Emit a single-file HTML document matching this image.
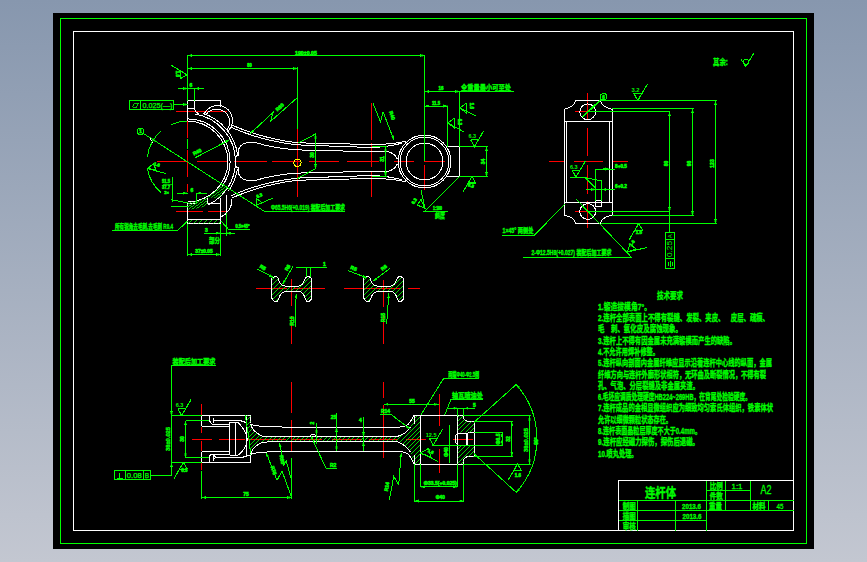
<!DOCTYPE html>
<html lang="zh"><head><meta charset="utf-8"><title>连杆体</title>
<style>
html,body{margin:0;padding:0;background:#c3c7d1;}
#wrap{position:relative;width:867px;height:562px;overflow:hidden;background:linear-gradient(to bottom,#8797ae 0%,#c3c7d1 100%);}
svg{position:absolute;left:0;top:0;display:block;font-family:"Liberation Sans","Noto Sans CJK SC",sans-serif;}
</style></head><body><div id="wrap">
<svg width="867" height="562" viewBox="0 0 867 562" fill="none" stroke-width="1" stroke-linecap="butt" shape-rendering="crispEdges">
<defs>
<clipPath id="hb1"><path d="M221.85 182.96 A40.5 40.5 0 0 1 187.5 202 V211 L187.5 209.5 A48 48 0 0 0 228.21 186.94 Z"/></clipPath>
<clipPath id="hb1b"><path d="M186 180 H207.4 V212 H186 Z M207.4 180 H232 V197.8 H207.4 Z" /></clipPath>
<clipPath id="hb2"><path d="M187.5 219.5 H220.5 V223.5 H187.5 Z"/></clipPath>
<clipPath id="sc1"><path d="M271.4 280 Q271.4 276.9 274.3 276.9 L276.5 276.9 Q278.1 277.1 278.9 280.5 Q281 286 285 286.1 L298.3 286.1 Q302.3 286 304.4 280.5 Q305.2 277.1 306.8 276.9 L309 276.9 Q311.6 276.9 311.6 280 L311.6 298 Q311.3 300.7 308.1 301.9 Q306.3 301.7 305.1 298 Q303 291.7 299 291.6 L286 291.6 Q281 291.7 278.9 298 Q277.7 301.7 276.1 301.9 Q272.3 300.7 271.4 296.8 Z"/></clipPath>
<clipPath id="sc2"><path d="M363.4 280 Q363.4 276.9 366.3 276.9 L368.5 276.9 Q370.1 277.1 370.9 280.5 Q373 286 377 286.1 L390.3 286.1 Q394.3 286 396.4 280.5 Q397.2 277.1 398.8 276.9 L401 276.9 Q403.6 276.9 403.6 280 L403.6 298 Q403.3 300.7 400.1 301.9 Q398.3 301.7 397.1 298 Q395 291.7 391 291.6 L378 291.6 Q373 291.7 370.9 298 Q369.7 301.7 368.1 301.9 Q364.3 300.7 363.4 296.8 Z"/></clipPath>
<clipPath id="web"><path d="M245.3 415.5 L250.5 415.5 L250.5 424.3 Q252 431 262 436 L272 436.6 H397 Q406 434 410.5 427 L414 416 L420.5 415.5 L420.5 464 L414 464 L410.5 452 Q406 445 397 441.6 H272 L262 443 Q252 447 250.5 455.5 L249.5 441.4 L247.5 430 Z"/></clipPath>
<clipPath id="se2"><path d="M457.8 415.5 H463.5 V418 Q465 421.5 469 421.5 H474 V432.5 H457.8 Z M457.8 445 H474 V456.5 H469 Q465 456.5 463.5 460 V464 H457.8 Z"/></clipPath>
</defs>
<rect x="53" y="13" width="761" height="536" fill="#000" stroke="none"/>
<rect x="60.5" y="18.5" width="746" height="525" stroke="#00ff00"/>
<rect x="73.5" y="31.5" width="720" height="499" stroke="#ffffff"/>
<g id="v1">
<line x1="157" y1="161.5" x2="187" y2="161.5" stroke="#ff0000"/>
<line x1="197" y1="161.5" x2="226.5" y2="161.5" stroke="#ff0000"/>
<line x1="234" y1="161.5" x2="266.7" y2="161.5" stroke="#ff0000"/>
<line x1="271.7" y1="161.5" x2="301" y2="161.5" stroke="#ff0000"/>
<line x1="309" y1="161.5" x2="339" y2="161.5" stroke="#ff0000"/>
<line x1="347" y1="161.5" x2="378.5" y2="161.5" stroke="#ff0000"/>
<line x1="393.5" y1="161.5" x2="414" y2="161.5" stroke="#ff0000"/>
<line x1="423.5" y1="161.5" x2="444.5" y2="161.5" stroke="#ff0000"/>
<line x1="187.5" y1="121" x2="187.5" y2="137.6" stroke="#ff0000"/>
<line x1="187.5" y1="139.3" x2="187.5" y2="148.5" stroke="#00ff00"/>
<line x1="187.5" y1="150" x2="187.5" y2="176.7" stroke="#ff0000"/>
<line x1="187.5" y1="184.3" x2="187.5" y2="191.8" stroke="#ff0000"/>
<line x1="176" y1="111.5" x2="227" y2="111.5" stroke="#ff0000"/>
<line x1="176" y1="211.5" x2="203" y2="211.5" stroke="#ff0000"/>
<line x1="208" y1="211.5" x2="227" y2="211.5" stroke="#ff0000"/>
<line x1="297.5" y1="129" x2="297.5" y2="197" stroke="#ff0000"/>
<line x1="371.5" y1="102.5" x2="371.5" y2="197" stroke="#ff0000" stroke-dasharray="37 3 24 5 40"/>
<line x1="424.5" y1="165" x2="424.5" y2="190" stroke="#ff0000"/>
<path d="M187.5 121.2 A40.3 40.3 0 0 1 227.8 161.5" stroke="#ffffff"/>
<path d="M187.5 118.9 A42.6 42.6 0 0 1 230.1 161.5" stroke="#ffffff"/>
<path d="M195.01 114.09 A48 48 0 0 1 235.5 161.5" stroke="#ffffff"/>
<path d="M203.11 113.47 A50.5 50.5 0 0 1 237.51 154.47" stroke="#ffffff"/>
<path d="M204.1 114.2 A14.9 14.9 0 1 1 228.4 130.7" stroke="#ffffff"/>
<path d="M206.2 114.2 A12.9 12.9 0 1 1 227 130" stroke="#ffffff"/>
<path d="M237.5 154.5 L235.6 158" stroke="#ffffff"/>
<path d="M231.7 125 Q262 138.5 297.5 142.8 L371.5 144.5 Q392 144.5 405.5 141.3" stroke="#ffffff"/>
<path d="M231.3 127.4 Q262 141 297.5 144.9 L371.5 147.5 Q388 147 401.5 143.3" stroke="#ffffff"/>
<path d="M238.2 156 L238.3 150.5 Q239.5 144.5 247 142.5 L255 142.5 Q275 148.5 297.5 149.9 L371.5 151.7 L388 151.7 Q395 153.5 397.3 159" stroke="#ffffff"/>
<line x1="238.6" y1="150.5" x2="238.6" y2="155.5" stroke="#ffffff"/>
<g transform="translate(0 323) scale(1 -1)">
<path d="M187.5 121.2 A40.3 40.3 0 0 1 227.8 161.5" stroke="#ffffff"/>
<path d="M221.96 136.46 A42.6 42.6 0 0 1 230.1 161.5" stroke="#ffffff"/>
<path d="M208.54 118.36 A48 48 0 0 1 235.5 161.5" stroke="#ffffff"/>
<path d="M228.36 131.82 A50.5 50.5 0 0 1 237.51 154.47" stroke="#ffffff"/>
<path d="M226.3 110.1 A14.9 14.9 0 0 1 231.2 124.3" stroke="#ffffff"/>
<path d="M237.5 154.5 L235.6 158" stroke="#ffffff"/>
<path d="M231.7 125 Q262 138.5 297.5 142.8 L371.5 144.5 Q392 144.5 405.5 141.3" stroke="#ffffff"/>
<path d="M231.3 127.4 Q262 141 297.5 144.9 L371.5 147.5 Q388 147 401.5 143.3" stroke="#ffffff"/>
<path d="M238.2 156 L238.3 150.5 Q239.5 144.5 247 142.5 L255 142.5 Q275 148.5 297.5 149.9 L371.5 151.7 L388 151.7 Q395 153.5 397.3 159" stroke="#ffffff"/>
<line x1="238.6" y1="150.5" x2="238.6" y2="155.5" stroke="#ffffff"/>
</g>
<polyline points="187.5,121 187.5,100.5 220.5,100.5 220.5,107.2" stroke="#ffffff"/>
<polyline points="187.5,108.3 194.5,108.3 194.5,100.5" stroke="#ffffff"/>
<path d="M194.5 108.3 Q195 112 198.5 114" stroke="#ffffff"/>
<polyline points="187.5,202 187.5,223.5 220.5,223.5 220.5,198" stroke="#ffffff"/>
<line x1="187.5" y1="219.5" x2="220.5" y2="219.5" stroke="#ffffff"/>
<line x1="187.5" y1="203" x2="196" y2="203" stroke="#ffffff"/>
<polyline points="207.4,197.8 207.4,203 220.5,203" stroke="#ffffff"/>
<line x1="226.3" y1="194.6" x2="226.3" y2="213.4" stroke="#ffffff"/>
<line x1="226.3" y1="213.4" x2="220.5" y2="217.5" stroke="#ffffff"/>
<g clip-path="url(#hb1b)">
<g clip-path="url(#hb1)">
<line x1="146.19" y1="214" x2="186" y2="184" stroke="#00ff00" stroke-width="0.85"/>
<line x1="149.79" y1="214" x2="189.6" y2="184" stroke="#00ff00" stroke-width="0.85"/>
<line x1="153.39" y1="214" x2="193.2" y2="184" stroke="#00ff00" stroke-width="0.85"/>
<line x1="156.99" y1="214" x2="196.8" y2="184" stroke="#00ff00" stroke-width="0.85"/>
<line x1="160.59" y1="214" x2="200.4" y2="184" stroke="#00ff00" stroke-width="0.85"/>
<line x1="164.19" y1="214" x2="204" y2="184" stroke="#00ff00" stroke-width="0.85"/>
<line x1="167.79" y1="214" x2="207.6" y2="184" stroke="#00ff00" stroke-width="0.85"/>
<line x1="171.39" y1="214" x2="211.2" y2="184" stroke="#00ff00" stroke-width="0.85"/>
<line x1="174.99" y1="214" x2="214.8" y2="184" stroke="#00ff00" stroke-width="0.85"/>
<line x1="178.59" y1="214" x2="218.4" y2="184" stroke="#00ff00" stroke-width="0.85"/>
<line x1="182.19" y1="214" x2="222" y2="184" stroke="#00ff00" stroke-width="0.85"/>
<line x1="185.79" y1="214" x2="225.6" y2="184" stroke="#00ff00" stroke-width="0.85"/>
<line x1="189.39" y1="214" x2="229.2" y2="184" stroke="#00ff00" stroke-width="0.85"/>
<line x1="192.99" y1="214" x2="232.8" y2="184" stroke="#00ff00" stroke-width="0.85"/>
<line x1="196.59" y1="214" x2="236.4" y2="184" stroke="#00ff00" stroke-width="0.85"/>
<line x1="200.19" y1="214" x2="240" y2="184" stroke="#00ff00" stroke-width="0.85"/>
<line x1="203.79" y1="214" x2="243.6" y2="184" stroke="#00ff00" stroke-width="0.85"/>
<line x1="207.39" y1="214" x2="247.2" y2="184" stroke="#00ff00" stroke-width="0.85"/>
<line x1="210.99" y1="214" x2="250.8" y2="184" stroke="#00ff00" stroke-width="0.85"/>
<line x1="214.59" y1="214" x2="254.4" y2="184" stroke="#00ff00" stroke-width="0.85"/>
<line x1="218.19" y1="214" x2="258" y2="184" stroke="#00ff00" stroke-width="0.85"/>
<line x1="221.79" y1="214" x2="261.6" y2="184" stroke="#00ff00" stroke-width="0.85"/>
<line x1="225.39" y1="214" x2="265.2" y2="184" stroke="#00ff00" stroke-width="0.85"/>
<line x1="228.99" y1="214" x2="268.8" y2="184" stroke="#00ff00" stroke-width="0.85"/>
<line x1="232.59" y1="214" x2="272.4" y2="184" stroke="#00ff00" stroke-width="0.85"/>
<line x1="236.19" y1="214" x2="276" y2="184" stroke="#00ff00" stroke-width="0.85"/>
<line x1="239.79" y1="214" x2="279.6" y2="184" stroke="#00ff00" stroke-width="0.85"/>
<line x1="243.39" y1="214" x2="283.2" y2="184" stroke="#00ff00" stroke-width="0.85"/>
<line x1="246.99" y1="214" x2="286.8" y2="184" stroke="#00ff00" stroke-width="0.85"/>
<line x1="250.59" y1="214" x2="290.4" y2="184" stroke="#00ff00" stroke-width="0.85"/>
<line x1="254.19" y1="214" x2="294" y2="184" stroke="#00ff00" stroke-width="0.85"/>
<line x1="257.79" y1="214" x2="297.6" y2="184" stroke="#00ff00" stroke-width="0.85"/>
<line x1="261.39" y1="214" x2="301.2" y2="184" stroke="#00ff00" stroke-width="0.85"/>
</g>
</g>
<g clip-path="url(#hb2)">
<line x1="182" y1="223.5" x2="186" y2="219.5" stroke="#00ff00" stroke-width="0.85"/>
<line x1="187" y1="223.5" x2="191" y2="219.5" stroke="#00ff00" stroke-width="0.85"/>
<line x1="192" y1="223.5" x2="196" y2="219.5" stroke="#00ff00" stroke-width="0.85"/>
<line x1="197" y1="223.5" x2="201" y2="219.5" stroke="#00ff00" stroke-width="0.85"/>
<line x1="202" y1="223.5" x2="206" y2="219.5" stroke="#00ff00" stroke-width="0.85"/>
<line x1="207" y1="223.5" x2="211" y2="219.5" stroke="#00ff00" stroke-width="0.85"/>
<line x1="212" y1="223.5" x2="216" y2="219.5" stroke="#00ff00" stroke-width="0.85"/>
<line x1="217" y1="223.5" x2="221" y2="219.5" stroke="#00ff00" stroke-width="0.85"/>
<line x1="222" y1="223.5" x2="226" y2="219.5" stroke="#00ff00" stroke-width="0.85"/>
</g>
<circle cx="424.5" cy="161.5" r="18.4" stroke="#ffffff"/>
<circle cx="424.5" cy="161.5" r="24.4" stroke="#ffffff"/>
<circle cx="424.5" cy="161.5" r="26.4" stroke="#ffffff"/>
<polyline points="447.3,146.5 459.5,146.5 459.5,176.5 447.3,176.5" stroke="#ffffff"/>
<circle cx="297.5" cy="162.8" r="3.6" stroke="#ffff00"/>
<line x1="187.5" y1="54.5" x2="187.5" y2="100.5" stroke="#00ff00"/>
<line x1="187.5" y1="55.5" x2="424.5" y2="55.5" stroke="#00ff00"/>
<polygon points="187.5,55.5 191.7,54.4 191.7,56.6" fill="#00ff00" stroke="#00ff00" stroke-width="0.4"/>
<polygon points="424.5,55.5 420.3,56.6 420.3,54.4" fill="#00ff00" stroke="#00ff00" stroke-width="0.4"/>
<text x="306" y="54.6" font-size="5" fill="#00ff00" stroke="#00ff00" stroke-width="0.5" text-anchor="middle" textLength="22" lengthAdjust="spacingAndGlyphs" font-weight="bold">190±0.05</text>
<line x1="424.5" y1="55" x2="424.5" y2="161" stroke="#00ff00"/>
<line x1="187.5" y1="68.5" x2="297.5" y2="68.5" stroke="#00ff00"/>
<polygon points="187.5,68.5 191.7,67.4 191.7,69.6" fill="#00ff00" stroke="#00ff00" stroke-width="0.4"/>
<polygon points="297.5,68.5 293.3,69.6 293.3,67.4" fill="#00ff00" stroke="#00ff00" stroke-width="0.4"/>
<text x="249.5" y="67.4" font-size="4.6" fill="#00ff00" stroke="#00ff00" stroke-width="0.5" text-anchor="middle" textLength="4.5" lengthAdjust="spacingAndGlyphs" font-weight="bold">80</text>
<line x1="297.5" y1="66.5" x2="297.5" y2="129" stroke="#00ff00"/>
<line x1="177.5" y1="88.5" x2="203.5" y2="88.5" stroke="#00ff00"/>
<polygon points="187.5,88.5 183.3,89.6 183.3,87.4" fill="#00ff00" stroke="#00ff00" stroke-width="0.4"/>
<polygon points="194.5,88.5 198.7,87.4 198.7,89.6" fill="#00ff00" stroke="#00ff00" stroke-width="0.4"/>
<line x1="194.5" y1="88.5" x2="194.5" y2="100.5" stroke="#00ff00"/>
<text x="191" y="86.5" font-size="5" fill="#00ff00" stroke="#00ff00" stroke-width="0.5" text-anchor="middle" font-weight="bold">6</text>
<line x1="171" y1="65" x2="186" y2="74.3" stroke="#00ff00"/>
<polygon points="187,75 180.5,70.5 180.5,78.5" stroke="#00ff00"/>
<text x="176" y="74" font-size="4.5" fill="#00ff00" stroke="#00ff00" stroke-width="0.5" text-anchor="middle" transform="rotate(90 176 74)" font-weight="bold">1.6</text>
<rect x="129.5" y="100.5" width="44" height="9" stroke="#00ff00"/>
<line x1="140.5" y1="100.5" x2="140.5" y2="109.5" stroke="#00ff00"/>
<polygon points="132.5,107 134.5,103 138.5,103 136.5,107" stroke="#00ff00" stroke-width="0.8"/>
<text x="142.5" y="107.6" font-size="7" fill="#00ff00" stroke="#00ff00" stroke-width="0.25" textLength="30" lengthAdjust="spacingAndGlyphs">0.025(—)</text>
<line x1="173.5" y1="104.5" x2="187.5" y2="104.5" stroke="#00ff00"/>
<polygon points="187.5,104.5 183.3,105.6 183.3,103.4" fill="#00ff00" stroke="#00ff00" stroke-width="0.4"/>
<polyline points="250,133.8 273,112.5 270.5,121.5 297.5,97.5" stroke="#00ff00"/>
<polygon points="250,133.8 252.32,130.13 253.82,131.74" fill="#00ff00" stroke="#00ff00" stroke-width="0.4"/>
<text x="281" y="108.5" font-size="5" fill="#00ff00" stroke="#00ff00" stroke-width="0.5" text-anchor="middle" transform="rotate(-42 281 108.5)" font-weight="bold">R80</text>
<line x1="195.3" y1="157.7" x2="229.6" y2="139.8" stroke="#00ff00"/>
<polygon points="229.6,139.8 226.38,142.72 225.37,140.76" fill="#00ff00" stroke="#00ff00" stroke-width="0.4"/>
<text x="198" y="153.5" font-size="5" fill="#00ff00" stroke="#00ff00" stroke-width="0.5" text-anchor="middle" transform="rotate(-27 198 153.5)" font-weight="bold">R40</text>
<circle cx="140.5" cy="131.4" r="3.2" stroke="#00ff00"/>
<text x="140.5" y="133.2" font-size="4.5" fill="#00ff00" stroke="#00ff00" stroke-width="0.5" text-anchor="middle" font-weight="bold">1</text>
<line x1="143" y1="133.2" x2="263.8" y2="211" stroke="#00ff00"/>
<polygon points="156,141.5 151.86,140.21 153.02,138.34" fill="#00ff00" stroke="#00ff00" stroke-width="0.4"/>
<line x1="150" y1="138" x2="153" y2="143" stroke="#ffffff"/>
<path d="M187.5 121.2 A40.3 40.3 0 0 0 171.11 124.68" stroke="#00ff00"/>
<path d="M161.6 130.63 A40.3 40.3 0 0 0 147.5 156.59" stroke="#00ff00"/>
<path d="M147.32 168.58 A40.8 40.8 0 0 0 161.27 192.75" stroke="#00ff00"/>
<line x1="147.3" y1="168.5" x2="166" y2="173.6" stroke="#00ff00"/>
<polygon points="148,168.3 153.5,163.5 156,170" stroke="#00ff00"/>
<text x="156.5" y="166" font-size="4.5" fill="#00ff00" stroke="#00ff00" stroke-width="0.5" text-anchor="middle" transform="rotate(15 156.5 166)" font-weight="bold">1.6</text>
<line x1="172.3" y1="177" x2="172.3" y2="202" stroke="#00ff00"/>
<text x="166" y="182.5" font-size="5" fill="#00ff00" stroke="#00ff00" stroke-width="0.5" text-anchor="middle" textLength="8" lengthAdjust="spacingAndGlyphs" font-weight="bold">51.5</text>
<text x="166" y="189" font-size="5" fill="#00ff00" stroke="#00ff00" stroke-width="0.5" text-anchor="middle" textLength="8" lengthAdjust="spacingAndGlyphs" font-weight="bold">37.7</text>
<text x="166.5" y="194" font-size="4" fill="#00ff00" stroke="#00ff00" stroke-width="0.5" text-anchor="middle" font-weight="bold">2×</text>
<line x1="163" y1="184" x2="172" y2="184" stroke="#00ff00" stroke-width="0.7"/>
<line x1="177" y1="193.2" x2="187.5" y2="193.2" stroke="#00ff00"/>
<line x1="196.5" y1="193.2" x2="206.5" y2="193.2" stroke="#00ff00"/>
<polygon points="187.5,193.2 183.3,194.3 183.3,192.1" fill="#00ff00" stroke="#00ff00" stroke-width="0.4"/>
<polygon points="196.5,193.2 200.7,192.1 200.7,194.3" fill="#00ff00" stroke="#00ff00" stroke-width="0.4"/>
<line x1="196.5" y1="193.2" x2="196.5" y2="203" stroke="#00ff00"/>
<text x="192" y="191.5" font-size="5" fill="#00ff00" stroke="#00ff00" stroke-width="0.5" text-anchor="middle" font-weight="bold">6</text>
<line x1="171" y1="199.5" x2="187.5" y2="203" stroke="#00ff00"/>
<line x1="171" y1="206" x2="187.5" y2="206" stroke="#00ff00"/>
<polyline points="297.5,143.2 316,133.8" stroke="#00ff00"/>
<polyline points="297.5,178.6 316,168.3" stroke="#00ff00"/>
<line x1="315.5" y1="133.8" x2="315.5" y2="168.5" stroke="#00ff00"/>
<polygon points="315.5,133.8 316.6,138 314.4,138" fill="#00ff00" stroke="#00ff00" stroke-width="0.4"/>
<polygon points="315.5,168.5 314.4,164.3 316.6,164.3" fill="#00ff00" stroke="#00ff00" stroke-width="0.4"/>
<text x="313.5" y="155" font-size="5" fill="#00ff00" stroke="#00ff00" stroke-width="0.5" text-anchor="middle" transform="rotate(-90 313.5 155)" font-weight="bold">30</text>
<line x1="371.5" y1="146.8" x2="386.5" y2="146.8" stroke="#00ff00"/>
<line x1="371.5" y1="176.6" x2="386.5" y2="176.6" stroke="#00ff00"/>
<line x1="385.5" y1="146.8" x2="385.5" y2="176.6" stroke="#00ff00"/>
<polygon points="385.5,146.8 386.6,151 384.4,151" fill="#00ff00" stroke="#00ff00" stroke-width="0.4"/>
<polygon points="385.5,176.6 384.4,172.4 386.6,172.4" fill="#00ff00" stroke="#00ff00" stroke-width="0.4"/>
<text x="383.5" y="159" font-size="5" fill="#00ff00" stroke="#00ff00" stroke-width="0.5" text-anchor="middle" transform="rotate(-90 383.5 159)" font-weight="bold">31</text>
<polyline points="373,103.4 380.5,121.8 383,111.7 394,140.2" stroke="#00ff00"/>
<polygon points="394,140.2 391.47,136.67 393.52,135.88" fill="#00ff00" stroke="#00ff00" stroke-width="0.4"/>
<text x="390.5" y="116" font-size="5" fill="#00ff00" stroke="#00ff00" stroke-width="0.5" text-anchor="middle" transform="rotate(70 390.5 116)" font-weight="bold">R40</text>
<text x="144" y="228.8" font-size="7" fill="#00ff00" stroke="#00ff00" stroke-width="0.35" text-anchor="middle" textLength="58" lengthAdjust="spacingAndGlyphs" font-weight="bold">所有锐角去毛刺,去毛刺 R0.4</text>
<polyline points="112,230.5 177.7,230.5 187.5,221" stroke="#00ff00"/>
<polyline points="220.9,221 228.7,229.5 249.6,229.5" stroke="#00ff00"/>
<text x="242.5" y="228" font-size="5" fill="#00ff00" stroke="#00ff00" stroke-width="0.5" text-anchor="middle" textLength="14" lengthAdjust="spacingAndGlyphs" font-weight="bold">0.5×45°</text>
<line x1="203.6" y1="233.2" x2="235.4" y2="233.2" stroke="#00ff00"/>
<polygon points="220.5,233.2 216.3,234.3 216.3,232.1" fill="#00ff00" stroke="#00ff00" stroke-width="0.4"/>
<polygon points="226.3,233.2 230.5,232.1 230.5,234.3" fill="#00ff00" stroke="#00ff00" stroke-width="0.4"/>
<text x="206.5" y="231.5" font-size="5" fill="#00ff00" stroke="#00ff00" stroke-width="0.5" text-anchor="middle" font-weight="bold">3</text>
<text x="214.5" y="243" font-size="7" fill="#00ff00" stroke="#00ff00" stroke-width="0.35" text-anchor="middle" textLength="11" lengthAdjust="spacingAndGlyphs" font-weight="bold">部分</text>
<line x1="187.5" y1="223.5" x2="187.5" y2="255.5" stroke="#00ff00"/>
<line x1="220.5" y1="223.5" x2="220.5" y2="255.5" stroke="#00ff00"/>
<line x1="226.3" y1="213" x2="226.3" y2="236" stroke="#00ff00"/>
<line x1="187.5" y1="254.5" x2="220.5" y2="254.5" stroke="#00ff00"/>
<polygon points="187.5,254.5 191.7,253.4 191.7,255.6" fill="#00ff00" stroke="#00ff00" stroke-width="0.4"/>
<polygon points="220.5,254.5 216.3,255.6 216.3,253.4" fill="#00ff00" stroke="#00ff00" stroke-width="0.4"/>
<text x="204" y="253" font-size="5" fill="#00ff00" stroke="#00ff00" stroke-width="0.5" text-anchor="middle" textLength="17.5" lengthAdjust="spacingAndGlyphs" font-weight="bold">37±0.05</text>
<text x="260" y="197" font-size="4.5" fill="#00ff00" stroke="#00ff00" stroke-width="0.5" text-anchor="middle" transform="rotate(-25 260 197)" font-weight="bold">6.3</text>
<polyline points="256.5,198.4 256.8,205.1 272.7,198.1" stroke="#00ff00"/>
<line x1="256.5" y1="198.4" x2="262" y2="202.8" stroke="#00ff00"/>
<text x="308" y="209.5" font-size="7" fill="#00ff00" stroke="#00ff00" stroke-width="0.35" text-anchor="middle" textLength="74" lengthAdjust="spacingAndGlyphs" font-weight="bold">Φ65.5H6(+0.019) 装配后加工要求</text>
<line x1="263.8" y1="211" x2="345.2" y2="211" stroke="#00ff00"/>
<line x1="424.5" y1="91.5" x2="514" y2="91.5" stroke="#00ff00"/>
<polygon points="424.5,91.5 428.7,90.4 428.7,92.6" fill="#00ff00" stroke="#00ff00" stroke-width="0.4"/>
<polygon points="459.5,91.5 455.3,92.6 455.3,90.4" fill="#00ff00" stroke="#00ff00" stroke-width="0.4"/>
<text x="441" y="90.3" font-size="5" fill="#00ff00" stroke="#00ff00" stroke-width="0.5" text-anchor="middle" textLength="5" lengthAdjust="spacingAndGlyphs" font-weight="bold">16</text>
<text x="486" y="89.5" font-size="6.8" fill="#00ff00" stroke="#00ff00" stroke-width="0.35" text-anchor="middle" textLength="50" lengthAdjust="spacingAndGlyphs" font-weight="bold">全重量最小可至处</text>
<line x1="459.5" y1="91.5" x2="459.5" y2="146.5" stroke="#00ff00"/>
<line x1="424.5" y1="106" x2="447.5" y2="106" stroke="#00ff00"/>
<polygon points="424.5,106 428.7,104.9 428.7,107.1" fill="#00ff00" stroke="#00ff00" stroke-width="0.4"/>
<polygon points="447.5,106 443.3,107.1 443.3,104.9" fill="#00ff00" stroke="#00ff00" stroke-width="0.4"/>
<text x="436" y="105" font-size="5" fill="#00ff00" stroke="#00ff00" stroke-width="0.5" text-anchor="middle" textLength="8" lengthAdjust="spacingAndGlyphs" font-weight="bold">11.5</text>
<line x1="447.5" y1="106" x2="447.5" y2="146.5" stroke="#00ff00"/>
<polygon points="460,108 466,103.5 466,112.5" stroke="#00ff00"/>
<line x1="460" y1="108" x2="476" y2="116" stroke="#00ff00"/>
<text x="470" y="106" font-size="4.5" fill="#00ff00" stroke="#00ff00" stroke-width="0.5" text-anchor="middle" transform="rotate(90 470 106)" font-weight="bold">1.6</text>
<polygon points="448,123 454,118.5 454,127.5" stroke="#00ff00"/>
<line x1="448" y1="123" x2="464" y2="132" stroke="#00ff00"/>
<text x="457.5" y="122" font-size="4.5" fill="#00ff00" stroke="#00ff00" stroke-width="0.5" text-anchor="middle" transform="rotate(90 457.5 122)" font-weight="bold">6.3</text>
<g transform="translate(474.5 146.5) rotate(0) scale(1.08)">
<polyline points="-3.6,-6.2 0,0 8.5,-14.5" stroke="#00ff00"/><line x1="-3.6" y1="-6.2" x2="3.6" y2="-6.2" stroke="#00ff00"/>
<text x="-2" y="-7.5" font-size="5" font-weight="bold" fill="#00ff00" stroke="none" text-anchor="middle">6.3</text>
</g>
<line x1="459.5" y1="146.5" x2="488" y2="146.5" stroke="#00ff00"/>
<line x1="459.5" y1="176.5" x2="488" y2="176.5" stroke="#00ff00"/>
<line x1="486.5" y1="146.5" x2="486.5" y2="176.5" stroke="#00ff00"/>
<polygon points="486.5,146.5 487.6,150.7 485.4,150.7" fill="#00ff00" stroke="#00ff00" stroke-width="0.4"/>
<polygon points="486.5,176.5 485.4,172.3 487.6,172.3" fill="#00ff00" stroke="#00ff00" stroke-width="0.4"/>
<text x="484.5" y="161.5" font-size="5" fill="#00ff00" stroke="#00ff00" stroke-width="0.5" text-anchor="middle" transform="rotate(-90 484.5 161.5)" font-weight="bold">34</text>
<g transform="translate(472 176.5) rotate(180) scale(1.05)">
<polyline points="-3.6,-6.2 0,0 8.5,-14.5" stroke="#00ff00"/><line x1="-3.6" y1="-6.2" x2="3.6" y2="-6.2" stroke="#00ff00"/>
</g>
<text x="470.5" y="187" font-size="4.5" fill="#00ff00" stroke="#00ff00" stroke-width="0.5" text-anchor="middle" transform="rotate(20 470.5 187)" font-weight="bold">6.3</text>
<line x1="421" y1="190.2" x2="425.2" y2="209.4" stroke="#00ff00"/>
<line x1="459.5" y1="176.5" x2="424.5" y2="211.4" stroke="#00ff00"/>
<line x1="423" y1="211.4" x2="447.8" y2="211.4" stroke="#00ff00"/>
<text x="437.5" y="209.5" font-size="5" fill="#00ff00" stroke="#00ff00" stroke-width="0.5" text-anchor="middle" textLength="9" lengthAdjust="spacingAndGlyphs" font-weight="bold">1:100</text>
<text x="440" y="218" font-size="6.5" fill="#00ff00" stroke="#00ff00" stroke-width="0.35" text-anchor="middle" textLength="10" lengthAdjust="spacingAndGlyphs" font-weight="bold">斜度</text>
<polygon points="424.8,208.5 417.5,205 421,199.5" stroke="#00ff00"/>
<text x="415.5" y="202" font-size="4.5" fill="#00ff00" stroke="#00ff00" stroke-width="0.5" text-anchor="middle" transform="rotate(-55 415.5 202)" font-weight="bold">6.3</text>
</g>
<g id="v2">
<line x1="587.5" y1="93" x2="587.5" y2="120" stroke="#ff0000"/>
<line x1="587.5" y1="127.5" x2="587.5" y2="156" stroke="#ff0000"/>
<line x1="587.5" y1="165" x2="587.5" y2="193.5" stroke="#ff0000"/>
<line x1="587.5" y1="201" x2="587.5" y2="228" stroke="#ff0000"/>
<line x1="575" y1="111.5" x2="597" y2="111.5" stroke="#ff0000"/>
<line x1="575" y1="211.5" x2="590" y2="211.5" stroke="#ff0000"/>
<line x1="549" y1="161.5" x2="565" y2="161.5" stroke="#ff0000"/>
<line x1="573.5" y1="161.5" x2="602.5" y2="161.5" stroke="#ff0000"/>
<line x1="611.5" y1="161.5" x2="628" y2="161.5" stroke="#ff0000"/>
<path d="M575.5 100.5 H600.5 Q602 107 612 109.3 V215.2 Q602 217 600.5 223.5 H575.5 Q574 217 564.5 215.2 V109.3 Q574 107 575.5 100.5 Z" stroke="#ffffff"/>
<line x1="564.5" y1="121.5" x2="612" y2="121.5" stroke="#ffffff"/>
<line x1="564.5" y1="202.5" x2="612" y2="202.5" stroke="#ffffff"/>
<line x1="566.8" y1="121.5" x2="566.8" y2="202.5" stroke="#ffffff"/>
<line x1="609.5" y1="121.5" x2="609.5" y2="202.5" stroke="#ffffff"/>
<circle cx="587.7" cy="111.8" r="7.9" stroke="#ffffff"/>
<circle cx="587.7" cy="211.5" r="7.9" stroke="#ffffff"/>
<rect x="595.5" y="200.5" width="6" height="6" stroke="#ffffff"/>
<line x1="600.5" y1="100.5" x2="716.5" y2="100.5" stroke="#00ff00"/>
<line x1="612" y1="108.5" x2="694" y2="108.5" stroke="#00ff00"/>
<line x1="587.5" y1="111.5" x2="669.5" y2="111.5" stroke="#00ff00"/>
<line x1="587.5" y1="211.5" x2="669.5" y2="211.5" stroke="#00ff00"/>
<line x1="612" y1="215.5" x2="694" y2="215.5" stroke="#00ff00"/>
<line x1="600.5" y1="223.5" x2="716.5" y2="223.5" stroke="#00ff00"/>
<line x1="669.5" y1="111.5" x2="669.5" y2="211.5" stroke="#00ff00"/>
<polygon points="669.5,111.5 670.6,115.7 668.4,115.7" fill="#00ff00" stroke="#00ff00" stroke-width="0.4"/>
<polygon points="669.5,211.5 668.4,207.3 670.6,207.3" fill="#00ff00" stroke="#00ff00" stroke-width="0.4"/>
<line x1="669.5" y1="211.5" x2="669.5" y2="232" stroke="#00ff00"/>
<line x1="692.5" y1="108.5" x2="692.5" y2="215.5" stroke="#00ff00"/>
<polygon points="692.5,108.5 693.6,112.7 691.4,112.7" fill="#00ff00" stroke="#00ff00" stroke-width="0.4"/>
<polygon points="692.5,215.5 691.4,211.3 693.6,211.3" fill="#00ff00" stroke="#00ff00" stroke-width="0.4"/>
<line x1="715.5" y1="100.5" x2="715.5" y2="223.5" stroke="#00ff00"/>
<polygon points="715.5,100.5 716.6,104.7 714.4,104.7" fill="#00ff00" stroke="#00ff00" stroke-width="0.4"/>
<polygon points="715.5,223.5 714.4,219.3 716.6,219.3" fill="#00ff00" stroke="#00ff00" stroke-width="0.4"/>
<text x="667.5" y="163.5" font-size="5" fill="#00ff00" stroke="#00ff00" stroke-width="0.5" text-anchor="middle" transform="rotate(-90 667.5 163.5)" font-weight="bold">80</text>
<text x="690.5" y="163.5" font-size="5" fill="#00ff00" stroke="#00ff00" stroke-width="0.5" text-anchor="middle" transform="rotate(-90 690.5 163.5)" font-weight="bold">98</text>
<text x="713.5" y="163.5" font-size="5" fill="#00ff00" stroke="#00ff00" stroke-width="0.5" text-anchor="middle" transform="rotate(-90 713.5 163.5)" font-weight="bold">123</text>
<circle cx="603.6" cy="96.7" r="3.2" stroke="#00ff00"/>
<text x="603.6" y="98.5" font-size="4.5" fill="#00ff00" stroke="#00ff00" stroke-width="0.5" text-anchor="middle" font-weight="bold">6</text>
<line x1="601.5" y1="99" x2="582.6" y2="116.8" stroke="#00ff00" stroke-width="1.6"/>
<g transform="translate(637.8 100.5) rotate(0) scale(1.15)">
<polyline points="-3.6,-6.2 0,0 8.5,-14.5" stroke="#00ff00"/><line x1="-3.6" y1="-6.2" x2="3.6" y2="-6.2" stroke="#00ff00"/>
<text x="-2" y="-7.5" font-size="5" font-weight="bold" fill="#00ff00" stroke="none" text-anchor="middle">3.2</text>
</g>
<line x1="595.5" y1="168.5" x2="595.5" y2="200.5" stroke="#00ff00"/>
<line x1="601.5" y1="180" x2="601.5" y2="200.5" stroke="#00ff00"/>
<line x1="595.5" y1="169" x2="614.5" y2="169" stroke="#00ff00"/>
<polygon points="601.5,169 605.7,167.9 605.7,170.1" fill="#00ff00" stroke="#00ff00" stroke-width="0.4"/>
<polygon points="609.5,169 605.3,170.1 605.3,167.9" fill="#00ff00" stroke="#00ff00" stroke-width="0.4"/>
<text x="621" y="167.5" font-size="5" fill="#00ff00" stroke="#00ff00" stroke-width="0.5" text-anchor="middle" textLength="12" lengthAdjust="spacingAndGlyphs" font-weight="bold">8+0.5</text>
<line x1="586" y1="189.5" x2="614.5" y2="189.5" stroke="#00ff00"/>
<polygon points="595.5,189.5 591.3,190.6 591.3,188.4" fill="#00ff00" stroke="#00ff00" stroke-width="0.4"/>
<polygon points="601.5,189.5 605.7,188.4 605.7,190.6" fill="#00ff00" stroke="#00ff00" stroke-width="0.4"/>
<text x="621" y="188" font-size="5" fill="#00ff00" stroke="#00ff00" stroke-width="0.5" text-anchor="middle" textLength="12" lengthAdjust="spacingAndGlyphs" font-weight="bold">6+0.2</text>
<g transform="translate(576 177) rotate(0) scale(1.1)">
<polyline points="-3.6,-6.2 0,0 8.5,-14.5" stroke="#00ff00"/><line x1="-3.6" y1="-6.2" x2="3.6" y2="-6.2" stroke="#00ff00"/>
<text x="-2" y="-7.5" font-size="5" font-weight="bold" fill="#00ff00" stroke="none" text-anchor="middle">6.3</text>
</g>
<line x1="570" y1="177.2" x2="585" y2="177.5" stroke="#00ff00"/>
<polyline points="585,177.5 601.5,181" stroke="#00ff00"/>
<polyline points="585,177.5 595.5,188" stroke="#00ff00"/>
<polyline points="564.5,204.4 534.4,235.2 502,235.2" stroke="#00ff00"/>
<text x="518" y="233.2" font-size="7" fill="#00ff00" stroke="#00ff00" stroke-width="0.35" text-anchor="middle" textLength="31" lengthAdjust="spacingAndGlyphs" font-weight="bold">1×45° 两侧处</text>
<polyline points="576.5,199.3 631.5,257.3 523,257.3" stroke="#00ff00"/>
<line x1="582" y1="205.5" x2="591.5" y2="215" stroke="#00ff00" stroke-width="1.8"/>
<text x="571.5" y="255" font-size="7" fill="#00ff00" stroke="#00ff00" stroke-width="0.35" text-anchor="middle" textLength="80" lengthAdjust="spacingAndGlyphs" font-weight="bold">2-Φ12.5H8(+0.027) 装配后加工要求</text>
<g transform="translate(638.7 223.5) rotate(180) scale(1.1)">
<polyline points="-3.6,-6.2 0,0 8.5,-14.5" stroke="#00ff00"/><line x1="-3.6" y1="-6.2" x2="3.6" y2="-6.2" stroke="#00ff00"/>
</g>
<text x="639" y="234" font-size="4.5" fill="#00ff00" stroke="#00ff00" stroke-width="0.5" text-anchor="middle" font-weight="bold">1.6</text>
<polygon points="627.5,252 630,244 636,249" stroke="#00ff00"/>
<line x1="627.5" y1="252" x2="647" y2="247.5" stroke="#00ff00"/>
<text x="633" y="244" font-size="4.5" fill="#00ff00" stroke="#00ff00" stroke-width="0.5" text-anchor="middle" transform="rotate(-50 633 244)" font-weight="bold">1.6</text>
<rect x="665.5" y="232.5" width="9" height="36" stroke="#00ff00"/>
<line x1="665.5" y1="239.5" x2="674.5" y2="239.5" stroke="#00ff00"/>
<line x1="665.5" y1="258.5" x2="674.5" y2="258.5" stroke="#00ff00"/>
<text x="672.3" y="249" font-size="7" fill="#00ff00" stroke="none" text-anchor="middle" transform="rotate(-90 672.3 249)" textLength="16" lengthAdjust="spacingAndGlyphs">0.25</text>
<text x="672.3" y="236.2" font-size="6" fill="#00ff00" stroke="none" text-anchor="middle" transform="rotate(-90 672.3 236.2)">A</text>
<line x1="668" y1="261.5" x2="668" y2="266" stroke="#00ff00"/>
<line x1="670" y1="260.5" x2="670" y2="267" stroke="#00ff00"/>
<line x1="672" y1="261.5" x2="672" y2="266" stroke="#00ff00"/>
<text x="720.5" y="64.8" font-size="8.5" fill="#00ff00" stroke="#00ff00" stroke-width="0.35" text-anchor="middle" textLength="15" lengthAdjust="spacingAndGlyphs" font-weight="bold">其余:</text>
<polyline points="741.3,59.6 745.7,66.5 753.8,53.3" stroke="#00ff00"/>
<circle cx="746" cy="61.8" r="2.7" stroke="#00ff00"/>
</g>
<g id="sec">
<line x1="256" y1="288.5" x2="286.5" y2="288.5" stroke="#ff0000"/>
<line x1="294" y1="288.5" x2="325" y2="288.5" stroke="#ff0000"/>
<line x1="291.5" y1="279" x2="291.5" y2="306" stroke="#ff0000"/>
<line x1="291.5" y1="315.5" x2="291.5" y2="343.5" stroke="#ff0000"/>
<line x1="344" y1="288.5" x2="400" y2="288.5" stroke="#ff0000"/>
<line x1="407.5" y1="288.5" x2="420" y2="288.5" stroke="#ff0000"/>
<line x1="383.5" y1="280" x2="383.5" y2="307" stroke="#ff0000"/>
<line x1="383.5" y1="314.5" x2="383.5" y2="343.5" stroke="#ff0000"/>
<g clip-path="url(#sc1)">
<line x1="244.5" y1="302.5" x2="270.5" y2="276.5" stroke="#00ff00" stroke-width="0.85"/>
<line x1="249.5" y1="302.5" x2="275.5" y2="276.5" stroke="#00ff00" stroke-width="0.85"/>
<line x1="254.5" y1="302.5" x2="280.5" y2="276.5" stroke="#00ff00" stroke-width="0.85"/>
<line x1="259.5" y1="302.5" x2="285.5" y2="276.5" stroke="#00ff00" stroke-width="0.85"/>
<line x1="264.5" y1="302.5" x2="290.5" y2="276.5" stroke="#00ff00" stroke-width="0.85"/>
<line x1="269.5" y1="302.5" x2="295.5" y2="276.5" stroke="#00ff00" stroke-width="0.85"/>
<line x1="274.5" y1="302.5" x2="300.5" y2="276.5" stroke="#00ff00" stroke-width="0.85"/>
<line x1="279.5" y1="302.5" x2="305.5" y2="276.5" stroke="#00ff00" stroke-width="0.85"/>
<line x1="284.5" y1="302.5" x2="310.5" y2="276.5" stroke="#00ff00" stroke-width="0.85"/>
<line x1="289.5" y1="302.5" x2="315.5" y2="276.5" stroke="#00ff00" stroke-width="0.85"/>
<line x1="294.5" y1="302.5" x2="320.5" y2="276.5" stroke="#00ff00" stroke-width="0.85"/>
<line x1="299.5" y1="302.5" x2="325.5" y2="276.5" stroke="#00ff00" stroke-width="0.85"/>
<line x1="304.5" y1="302.5" x2="330.5" y2="276.5" stroke="#00ff00" stroke-width="0.85"/>
<line x1="309.5" y1="302.5" x2="335.5" y2="276.5" stroke="#00ff00" stroke-width="0.85"/>
<line x1="314.5" y1="302.5" x2="340.5" y2="276.5" stroke="#00ff00" stroke-width="0.85"/>
<line x1="319.5" y1="302.5" x2="345.5" y2="276.5" stroke="#00ff00" stroke-width="0.85"/>
<line x1="324.5" y1="302.5" x2="350.5" y2="276.5" stroke="#00ff00" stroke-width="0.85"/>
<line x1="329.5" y1="302.5" x2="355.5" y2="276.5" stroke="#00ff00" stroke-width="0.85"/>
<line x1="334.5" y1="302.5" x2="360.5" y2="276.5" stroke="#00ff00" stroke-width="0.85"/>
</g>
<path d="M271.4 280 Q271.4 276.9 274.3 276.9 L276.5 276.9 Q278.1 277.1 278.9 280.5 Q281 286 285 286.1 L298.3 286.1 Q302.3 286 304.4 280.5 Q305.2 277.1 306.8 276.9 L309 276.9 Q311.6 276.9 311.6 280 L311.6 298 Q311.3 300.7 308.1 301.9 Q306.3 301.7 305.1 298 Q303 291.7 299 291.6 L286 291.6 Q281 291.7 278.9 298 Q277.7 301.7 276.1 301.9 Q272.3 300.7 271.4 296.8 Z" stroke="#ffffff"/>
<g clip-path="url(#sc2)">
<line x1="336.5" y1="302.5" x2="362.5" y2="276.5" stroke="#00ff00" stroke-width="0.85"/>
<line x1="341.5" y1="302.5" x2="367.5" y2="276.5" stroke="#00ff00" stroke-width="0.85"/>
<line x1="346.5" y1="302.5" x2="372.5" y2="276.5" stroke="#00ff00" stroke-width="0.85"/>
<line x1="351.5" y1="302.5" x2="377.5" y2="276.5" stroke="#00ff00" stroke-width="0.85"/>
<line x1="356.5" y1="302.5" x2="382.5" y2="276.5" stroke="#00ff00" stroke-width="0.85"/>
<line x1="361.5" y1="302.5" x2="387.5" y2="276.5" stroke="#00ff00" stroke-width="0.85"/>
<line x1="366.5" y1="302.5" x2="392.5" y2="276.5" stroke="#00ff00" stroke-width="0.85"/>
<line x1="371.5" y1="302.5" x2="397.5" y2="276.5" stroke="#00ff00" stroke-width="0.85"/>
<line x1="376.5" y1="302.5" x2="402.5" y2="276.5" stroke="#00ff00" stroke-width="0.85"/>
<line x1="381.5" y1="302.5" x2="407.5" y2="276.5" stroke="#00ff00" stroke-width="0.85"/>
<line x1="386.5" y1="302.5" x2="412.5" y2="276.5" stroke="#00ff00" stroke-width="0.85"/>
<line x1="391.5" y1="302.5" x2="417.5" y2="276.5" stroke="#00ff00" stroke-width="0.85"/>
<line x1="396.5" y1="302.5" x2="422.5" y2="276.5" stroke="#00ff00" stroke-width="0.85"/>
<line x1="401.5" y1="302.5" x2="427.5" y2="276.5" stroke="#00ff00" stroke-width="0.85"/>
<line x1="406.5" y1="302.5" x2="432.5" y2="276.5" stroke="#00ff00" stroke-width="0.85"/>
<line x1="411.5" y1="302.5" x2="437.5" y2="276.5" stroke="#00ff00" stroke-width="0.85"/>
<line x1="416.5" y1="302.5" x2="442.5" y2="276.5" stroke="#00ff00" stroke-width="0.85"/>
<line x1="421.5" y1="302.5" x2="447.5" y2="276.5" stroke="#00ff00" stroke-width="0.85"/>
<line x1="426.5" y1="302.5" x2="452.5" y2="276.5" stroke="#00ff00" stroke-width="0.85"/>
</g>
<path d="M363.4 280 Q363.4 276.9 366.3 276.9 L368.5 276.9 Q370.1 277.1 370.9 280.5 Q373 286 377 286.1 L390.3 286.1 Q394.3 286 396.4 280.5 Q397.2 277.1 398.8 276.9 L401 276.9 Q403.6 276.9 403.6 280 L403.6 298 Q403.3 300.7 400.1 301.9 Q398.3 301.7 397.1 298 Q395 291.7 391 291.6 L378 291.6 Q373 291.7 370.9 298 Q369.7 301.7 368.1 301.9 Q364.3 300.7 363.4 296.8 Z" stroke="#ffffff"/>
<polyline points="296.2,293.5 295.1,326.8" stroke="#00ff00"/>
<polygon points="296.2,293.5 297.15,297.74 294.95,297.66" fill="#00ff00" stroke="#00ff00" stroke-width="0.4"/>
<text x="294" y="321" font-size="5" fill="#00ff00" stroke="#00ff00" stroke-width="0.5" text-anchor="middle" transform="rotate(-90 294 321)" font-weight="bold">R15</text>
<line x1="296.2" y1="267.5" x2="327.4" y2="267.5" stroke="#00ff00"/>
<line x1="306.2" y1="267.5" x2="306.2" y2="277" stroke="#00ff00"/>
<line x1="310.7" y1="267.5" x2="310.7" y2="277" stroke="#00ff00"/>
<text x="324.3" y="266" font-size="5" fill="#00ff00" stroke="#00ff00" stroke-width="0.5" text-anchor="middle" font-weight="bold">1</text>
<line x1="257.7" y1="269.1" x2="273.3" y2="277.5" stroke="#00ff00"/>
<polygon points="273.3,277.5 269.08,276.5 270.11,274.56" fill="#00ff00" stroke="#00ff00" stroke-width="0.4"/>
<text x="262" y="269" font-size="5" fill="#00ff00" stroke="#00ff00" stroke-width="0.5" text-anchor="middle" transform="rotate(28 262 269)" font-weight="bold">R5</text>
<line x1="293" y1="266.4" x2="282.7" y2="284.1" stroke="#00ff00"/>
<polygon points="282.7,284.1 283.85,279.91 285.75,281.01" fill="#00ff00" stroke="#00ff00" stroke-width="0.4"/>
<text x="289" y="268.5" font-size="5" fill="#00ff00" stroke="#00ff00" stroke-width="0.5" text-anchor="middle" transform="rotate(-60 289 268.5)" font-weight="bold">R6</text>
<polyline points="388.8,293.5 386.7,323.7" stroke="#00ff00"/>
<polygon points="388.8,293.5 389.6,297.77 387.41,297.61" fill="#00ff00" stroke="#00ff00" stroke-width="0.4"/>
<text x="385" y="317.5" font-size="5" fill="#00ff00" stroke="#00ff00" stroke-width="0.5" text-anchor="middle" transform="rotate(-90 385 317.5)" font-weight="bold">R15</text>
<line x1="348.2" y1="270.6" x2="366.9" y2="277.9" stroke="#00ff00"/>
<polygon points="366.9,277.9 362.58,277.42 363.37,275.37" fill="#00ff00" stroke="#00ff00" stroke-width="0.4"/>
<text x="353" y="270" font-size="5" fill="#00ff00" stroke="#00ff00" stroke-width="0.5" text-anchor="middle" transform="rotate(21 353 270)" font-weight="bold">R5</text>
<line x1="389.8" y1="268.5" x2="373.2" y2="281" stroke="#00ff00"/>
<polygon points="373.2,281 375.89,277.59 377.22,279.35" fill="#00ff00" stroke="#00ff00" stroke-width="0.4"/>
<text x="385" y="269" font-size="5" fill="#00ff00" stroke="#00ff00" stroke-width="0.5" text-anchor="middle" transform="rotate(-37 385 269)" font-weight="bold">R6</text>
</g>
<g id="v3">
<line x1="201.5" y1="404" x2="201.5" y2="415" stroke="#ff0000"/>
<line x1="201.5" y1="427" x2="201.5" y2="432.5" stroke="#ff0000"/>
<line x1="201.5" y1="441.3" x2="201.5" y2="451" stroke="#ff0000"/>
<line x1="201.5" y1="463" x2="201.5" y2="469.7" stroke="#ff0000"/>
<line x1="192" y1="439.5" x2="212" y2="439.5" stroke="#ff0000"/>
<line x1="219" y1="439.5" x2="245" y2="439.5" stroke="#ff0000"/>
<line x1="247" y1="439.5" x2="286" y2="439.5" stroke="#ff0000"/>
<line x1="292" y1="439.5" x2="322" y2="439.5" stroke="#ff0000"/>
<line x1="332" y1="439.5" x2="362" y2="439.5" stroke="#ff0000"/>
<line x1="369" y1="439.5" x2="398" y2="439.5" stroke="#ff0000"/>
<line x1="406" y1="439.5" x2="426" y2="439.5" stroke="#ff0000"/>
<line x1="453" y1="439.5" x2="473" y2="439.5" stroke="#ff0000"/>
<line x1="291.5" y1="382" x2="291.5" y2="412.8" stroke="#ff0000"/>
<line x1="291.5" y1="420" x2="291.5" y2="451" stroke="#ff0000"/>
<line x1="383.5" y1="382" x2="383.5" y2="397.7" stroke="#ff0000"/>
<line x1="383.5" y1="405" x2="383.5" y2="457.5" stroke="#ff0000"/>
<line x1="439.5" y1="394.3" x2="439.5" y2="425.5" stroke="#ff0000"/>
<line x1="439.5" y1="448.5" x2="439.5" y2="472.5" stroke="#ff0000"/>
<polyline points="201.5,426.4 201.5,415.5 250.5,415.5 250.5,423" stroke="#ffffff"/>
<polyline points="201.5,451.6 201.5,462.5 250.5,462.5 250.5,455.5" stroke="#ffffff"/>
<line x1="201.5" y1="426.4" x2="229.5" y2="426.4" stroke="#ffffff"/>
<line x1="201.5" y1="451.6" x2="229.5" y2="451.6" stroke="#ffffff"/>
<path d="M209.4 415.5 V421 L212.3 424.3 H229.5" stroke="#ffffff"/>
<path d="M213.6 420.5 H240 L246.2 422.6" stroke="#ffffff"/>
<path d="M209.4 462.5 V456.5 Q210 454.4 213 454.2 H229.5" stroke="#ffffff"/>
<path d="M215.7 457.2 H242.8 L250.5 455" stroke="#ffffff"/>
<line x1="213.5" y1="418" x2="213.5" y2="423" stroke="#ffffff"/>
<polyline points="213.5,455 213.5,459.8 215.7,457.2 213.5,455" stroke="#ffffff"/>
<polyline points="229.5,455.1 229.5,422.4 235,422.4 235,455.1" stroke="#ffffff"/>
<line x1="229.5" y1="455.1" x2="238" y2="455.1" stroke="#ffffff"/>
<path d="M235 422.6 L238.5 423 Q246 430 247.4 439.4 Q246 449 238.5 455 L235 455.5" stroke="#ffffff"/>
<line x1="246" y1="415.5" x2="246" y2="456" stroke="#ffffff"/>
<path d="M250.8 424.3 Q256 426 262 426.3 L291 427.3 H397 Q405 427 408.5 424 Q412 420 413.8 415.5" stroke="#ffffff"/>
<path d="M250.8 454.3 Q256 452.5 262 452.2 L291 451 H397 Q405 451.5 408.5 454.5 Q412 458 413.8 464" stroke="#ffffff"/>
<polyline points="245.3,415.5 247.5,430 249.5,441.4 250.5,455.5" stroke="#00ff00"/>
<g clip-path="url(#web)">
<line x1="192" y1="466" x2="244" y2="414" stroke="#00ff00" stroke-width="0.85"/>
<line x1="196.6" y1="466" x2="248.6" y2="414" stroke="#00ff00" stroke-width="0.85"/>
<line x1="201.2" y1="466" x2="253.2" y2="414" stroke="#00ff00" stroke-width="0.85"/>
<line x1="205.8" y1="466" x2="257.8" y2="414" stroke="#00ff00" stroke-width="0.85"/>
<line x1="210.4" y1="466" x2="262.4" y2="414" stroke="#00ff00" stroke-width="0.85"/>
<line x1="215" y1="466" x2="267" y2="414" stroke="#00ff00" stroke-width="0.85"/>
<line x1="219.6" y1="466" x2="271.6" y2="414" stroke="#00ff00" stroke-width="0.85"/>
<line x1="224.2" y1="466" x2="276.2" y2="414" stroke="#00ff00" stroke-width="0.85"/>
<line x1="228.8" y1="466" x2="280.8" y2="414" stroke="#00ff00" stroke-width="0.85"/>
<line x1="233.4" y1="466" x2="285.4" y2="414" stroke="#00ff00" stroke-width="0.85"/>
<line x1="238" y1="466" x2="290" y2="414" stroke="#00ff00" stroke-width="0.85"/>
<line x1="242.6" y1="466" x2="294.6" y2="414" stroke="#00ff00" stroke-width="0.85"/>
<line x1="247.2" y1="466" x2="299.2" y2="414" stroke="#00ff00" stroke-width="0.85"/>
<line x1="251.8" y1="466" x2="303.8" y2="414" stroke="#00ff00" stroke-width="0.85"/>
<line x1="256.4" y1="466" x2="308.4" y2="414" stroke="#00ff00" stroke-width="0.85"/>
<line x1="261" y1="466" x2="313" y2="414" stroke="#00ff00" stroke-width="0.85"/>
<line x1="265.6" y1="466" x2="317.6" y2="414" stroke="#00ff00" stroke-width="0.85"/>
<line x1="270.2" y1="466" x2="322.2" y2="414" stroke="#00ff00" stroke-width="0.85"/>
<line x1="274.8" y1="466" x2="326.8" y2="414" stroke="#00ff00" stroke-width="0.85"/>
<line x1="279.4" y1="466" x2="331.4" y2="414" stroke="#00ff00" stroke-width="0.85"/>
<line x1="284" y1="466" x2="336" y2="414" stroke="#00ff00" stroke-width="0.85"/>
<line x1="288.6" y1="466" x2="340.6" y2="414" stroke="#00ff00" stroke-width="0.85"/>
<line x1="293.2" y1="466" x2="345.2" y2="414" stroke="#00ff00" stroke-width="0.85"/>
<line x1="297.8" y1="466" x2="349.8" y2="414" stroke="#00ff00" stroke-width="0.85"/>
<line x1="302.4" y1="466" x2="354.4" y2="414" stroke="#00ff00" stroke-width="0.85"/>
<line x1="307" y1="466" x2="359" y2="414" stroke="#00ff00" stroke-width="0.85"/>
<line x1="311.6" y1="466" x2="363.6" y2="414" stroke="#00ff00" stroke-width="0.85"/>
<line x1="316.2" y1="466" x2="368.2" y2="414" stroke="#00ff00" stroke-width="0.85"/>
<line x1="320.8" y1="466" x2="372.8" y2="414" stroke="#00ff00" stroke-width="0.85"/>
<line x1="325.4" y1="466" x2="377.4" y2="414" stroke="#00ff00" stroke-width="0.85"/>
<line x1="330" y1="466" x2="382" y2="414" stroke="#00ff00" stroke-width="0.85"/>
<line x1="334.6" y1="466" x2="386.6" y2="414" stroke="#00ff00" stroke-width="0.85"/>
<line x1="339.2" y1="466" x2="391.2" y2="414" stroke="#00ff00" stroke-width="0.85"/>
<line x1="343.8" y1="466" x2="395.8" y2="414" stroke="#00ff00" stroke-width="0.85"/>
<line x1="348.4" y1="466" x2="400.4" y2="414" stroke="#00ff00" stroke-width="0.85"/>
<line x1="353" y1="466" x2="405" y2="414" stroke="#00ff00" stroke-width="0.85"/>
<line x1="357.6" y1="466" x2="409.6" y2="414" stroke="#00ff00" stroke-width="0.85"/>
<line x1="362.2" y1="466" x2="414.2" y2="414" stroke="#00ff00" stroke-width="0.85"/>
<line x1="366.8" y1="466" x2="418.8" y2="414" stroke="#00ff00" stroke-width="0.85"/>
<line x1="371.4" y1="466" x2="423.4" y2="414" stroke="#00ff00" stroke-width="0.85"/>
<line x1="376" y1="466" x2="428" y2="414" stroke="#00ff00" stroke-width="0.85"/>
<line x1="380.6" y1="466" x2="432.6" y2="414" stroke="#00ff00" stroke-width="0.85"/>
<line x1="385.2" y1="466" x2="437.2" y2="414" stroke="#00ff00" stroke-width="0.85"/>
<line x1="389.8" y1="466" x2="441.8" y2="414" stroke="#00ff00" stroke-width="0.85"/>
<line x1="394.4" y1="466" x2="446.4" y2="414" stroke="#00ff00" stroke-width="0.85"/>
<line x1="399" y1="466" x2="451" y2="414" stroke="#00ff00" stroke-width="0.85"/>
<line x1="403.6" y1="466" x2="455.6" y2="414" stroke="#00ff00" stroke-width="0.85"/>
<line x1="408.2" y1="466" x2="460.2" y2="414" stroke="#00ff00" stroke-width="0.85"/>
<line x1="412.8" y1="466" x2="464.8" y2="414" stroke="#00ff00" stroke-width="0.85"/>
<line x1="417.4" y1="466" x2="469.4" y2="414" stroke="#00ff00" stroke-width="0.85"/>
<line x1="422" y1="466" x2="474" y2="414" stroke="#00ff00" stroke-width="0.85"/>
<line x1="426.6" y1="466" x2="478.6" y2="414" stroke="#00ff00" stroke-width="0.85"/>
<line x1="431.2" y1="466" x2="483.2" y2="414" stroke="#00ff00" stroke-width="0.85"/>
<line x1="435.8" y1="466" x2="487.8" y2="414" stroke="#00ff00" stroke-width="0.85"/>
<line x1="440.4" y1="466" x2="492.4" y2="414" stroke="#00ff00" stroke-width="0.85"/>
<line x1="445" y1="466" x2="497" y2="414" stroke="#00ff00" stroke-width="0.85"/>
<line x1="449.6" y1="466" x2="501.6" y2="414" stroke="#00ff00" stroke-width="0.85"/>
<line x1="454.2" y1="466" x2="506.2" y2="414" stroke="#00ff00" stroke-width="0.85"/>
<line x1="458.8" y1="466" x2="510.8" y2="414" stroke="#00ff00" stroke-width="0.85"/>
<line x1="463.4" y1="466" x2="515.4" y2="414" stroke="#00ff00" stroke-width="0.85"/>
<line x1="468" y1="466" x2="520" y2="414" stroke="#00ff00" stroke-width="0.85"/>
<line x1="472.6" y1="466" x2="524.6" y2="414" stroke="#00ff00" stroke-width="0.85"/>
</g>
<path d="M250.8 424.3 Q252 431 262 436 L272 436.6 H397 Q406 434 410.5 427" stroke="#ffffff"/>
<path d="M250.8 454.3 Q252 447 262 442.5 L272 441.6 H397 Q406 445 410.5 452" stroke="#ffffff"/>
<path d="M309.5 436.6 Q311 433.8 313 434 Q315 434.3 316 436.6" stroke="#ffffff"/>
<polyline points="413.8,415.5 463.5,415.5" stroke="#ffffff"/>
<polyline points="413.8,464 463.5,464" stroke="#ffffff"/>
<line x1="414" y1="415.5" x2="414" y2="424" stroke="#ffffff"/>
<line x1="414" y1="455" x2="414" y2="464" stroke="#ffffff"/>
<line x1="420.5" y1="415.5" x2="420.5" y2="464" stroke="#ffffff"/>
<line x1="457.8" y1="415.5" x2="457.8" y2="464" stroke="#ffffff"/>
<path d="M463.5 415.5 V418 Q465 421.5 469 421.5 H474 V456.5 H469 Q465 456.5 463.5 460 V464" stroke="#ffffff"/>
<path d="M457.8 433 H466 V445 H457.8 L455.3 442.5 V435.5 Z" stroke="#ffffff"/>
<line x1="467.5" y1="432.5" x2="467.5" y2="445" stroke="#ffffff"/>
<line x1="467.5" y1="432.5" x2="474" y2="432.5" stroke="#ffffff"/>
<line x1="467.5" y1="445" x2="474" y2="445" stroke="#ffffff"/>
<g clip-path="url(#se2)">
<line x1="404" y1="466" x2="456" y2="414" stroke="#00ff00" stroke-width="0.85"/>
<line x1="408.6" y1="466" x2="460.6" y2="414" stroke="#00ff00" stroke-width="0.85"/>
<line x1="413.2" y1="466" x2="465.2" y2="414" stroke="#00ff00" stroke-width="0.85"/>
<line x1="417.8" y1="466" x2="469.8" y2="414" stroke="#00ff00" stroke-width="0.85"/>
<line x1="422.4" y1="466" x2="474.4" y2="414" stroke="#00ff00" stroke-width="0.85"/>
<line x1="427" y1="466" x2="479" y2="414" stroke="#00ff00" stroke-width="0.85"/>
<line x1="431.6" y1="466" x2="483.6" y2="414" stroke="#00ff00" stroke-width="0.85"/>
<line x1="436.2" y1="466" x2="488.2" y2="414" stroke="#00ff00" stroke-width="0.85"/>
<line x1="440.8" y1="466" x2="492.8" y2="414" stroke="#00ff00" stroke-width="0.85"/>
<line x1="445.4" y1="466" x2="497.4" y2="414" stroke="#00ff00" stroke-width="0.85"/>
<line x1="450" y1="466" x2="502" y2="414" stroke="#00ff00" stroke-width="0.85"/>
<line x1="454.6" y1="466" x2="506.6" y2="414" stroke="#00ff00" stroke-width="0.85"/>
<line x1="459.2" y1="466" x2="511.2" y2="414" stroke="#00ff00" stroke-width="0.85"/>
<line x1="463.8" y1="466" x2="515.8" y2="414" stroke="#00ff00" stroke-width="0.85"/>
<line x1="468.4" y1="466" x2="520.4" y2="414" stroke="#00ff00" stroke-width="0.85"/>
<line x1="473" y1="466" x2="525" y2="414" stroke="#00ff00" stroke-width="0.85"/>
<line x1="477.6" y1="466" x2="529.6" y2="414" stroke="#00ff00" stroke-width="0.85"/>
<line x1="482.2" y1="466" x2="534.2" y2="414" stroke="#00ff00" stroke-width="0.85"/>
<line x1="486.8" y1="466" x2="538.8" y2="414" stroke="#00ff00" stroke-width="0.85"/>
<line x1="491.4" y1="466" x2="543.4" y2="414" stroke="#00ff00" stroke-width="0.85"/>
<line x1="496" y1="466" x2="548" y2="414" stroke="#00ff00" stroke-width="0.85"/>
<line x1="500.6" y1="466" x2="552.6" y2="414" stroke="#00ff00" stroke-width="0.85"/>
<line x1="505.2" y1="466" x2="557.2" y2="414" stroke="#00ff00" stroke-width="0.85"/>
<line x1="509.8" y1="466" x2="561.8" y2="414" stroke="#00ff00" stroke-width="0.85"/>
<line x1="514.4" y1="466" x2="566.4" y2="414" stroke="#00ff00" stroke-width="0.85"/>
<line x1="519" y1="466" x2="571" y2="414" stroke="#00ff00" stroke-width="0.85"/>
<line x1="523.6" y1="466" x2="575.6" y2="414" stroke="#00ff00" stroke-width="0.85"/>
</g>
<text x="194" y="364" font-size="7" fill="#00ff00" stroke="#00ff00" stroke-width="0.35" text-anchor="middle" textLength="43" lengthAdjust="spacingAndGlyphs" font-weight="bold">装配后加工要求</text>
<polyline points="215.5,365.8 171.5,365.8 171.5,475.2 150.5,475.2" stroke="#00ff00"/>
<line x1="171.5" y1="415.5" x2="201.5" y2="415.5" stroke="#00ff00"/>
<line x1="171.5" y1="462.5" x2="201.5" y2="462.5" stroke="#00ff00"/>
<polygon points="171.5,415.5 170.4,411.3 172.6,411.3" fill="#00ff00" stroke="#00ff00" stroke-width="0.4"/>
<polygon points="171.5,462.5 172.6,466.7 170.4,466.7" fill="#00ff00" stroke="#00ff00" stroke-width="0.4"/>
<text x="169.5" y="439" font-size="5.5" fill="#00ff00" stroke="#00ff00" stroke-width="0.35" text-anchor="middle" transform="rotate(-90 169.5 439)" textLength="24" lengthAdjust="spacingAndGlyphs" font-weight="bold">38±0.025</text>
<line x1="185.5" y1="420.5" x2="185.5" y2="457.8" stroke="#00ff00"/>
<polygon points="185.5,420.5 186.6,424.7 184.4,424.7" fill="#00ff00" stroke="#00ff00" stroke-width="0.4"/>
<polygon points="185.5,457.8 184.4,453.6 186.6,453.6" fill="#00ff00" stroke="#00ff00" stroke-width="0.4"/>
<line x1="185.5" y1="420.2" x2="209.3" y2="420.2" stroke="#00ff00"/>
<line x1="185.5" y1="457.8" x2="209.3" y2="457.8" stroke="#00ff00"/>
<text x="183.5" y="439" font-size="5" fill="#00ff00" stroke="#00ff00" stroke-width="0.5" text-anchor="middle" transform="rotate(-90 183.5 439)" font-weight="bold">30</text>
<g transform="translate(181.7 415.5) rotate(0) scale(1.1)">
<polyline points="-3.6,-6.2 0,0 8.5,-14.5" stroke="#00ff00"/><line x1="-3.6" y1="-6.2" x2="3.6" y2="-6.2" stroke="#00ff00"/>
<text x="-2" y="-7.5" font-size="5" font-weight="bold" fill="#00ff00" stroke="none" text-anchor="middle">6.3</text>
</g>
<g transform="translate(183.4 462.5) rotate(180) scale(1.1)">
<polyline points="-3.6,-6.2 0,0 8.5,-14.5" stroke="#00ff00"/><line x1="-3.6" y1="-6.2" x2="3.6" y2="-6.2" stroke="#00ff00"/>
</g>
<text x="184.5" y="471.5" font-size="4.5" fill="#00ff00" stroke="#00ff00" stroke-width="0.5" text-anchor="middle" font-weight="bold">6.3</text>
<rect x="114.5" y="470.5" width="36" height="9" stroke="#00ff00"/>
<line x1="125" y1="470.5" x2="125" y2="479.5" stroke="#00ff00"/>
<line x1="143.5" y1="470.5" x2="143.5" y2="479.5" stroke="#00ff00"/>
<line x1="119.7" y1="472.5" x2="119.7" y2="478" stroke="#00ff00"/>
<line x1="117" y1="478" x2="122.5" y2="478" stroke="#00ff00"/>
<text x="134.3" y="478" font-size="7" fill="#00ff00" stroke="#00ff00" stroke-width="0.25" text-anchor="middle" textLength="15" lengthAdjust="spacingAndGlyphs">0.08</text>
<text x="147" y="478" font-size="6.5" fill="#00ff00" stroke="#00ff00" stroke-width="0.25" text-anchor="middle">B</text>
<line x1="201.5" y1="471" x2="201.5" y2="499" stroke="#00ff00"/>
<line x1="291.5" y1="458" x2="291.5" y2="499" stroke="#00ff00"/>
<line x1="201.5" y1="497.5" x2="291.5" y2="497.5" stroke="#00ff00"/>
<polygon points="201.5,497.5 205.7,496.4 205.7,498.6" fill="#00ff00" stroke="#00ff00" stroke-width="0.4"/>
<polygon points="291.5,497.5 287.3,498.6 287.3,496.4" fill="#00ff00" stroke="#00ff00" stroke-width="0.4"/>
<text x="246" y="495.5" font-size="5" fill="#00ff00" stroke="#00ff00" stroke-width="0.5" text-anchor="middle" font-weight="bold">75</text>
<polyline points="266.2,452.7 277,480.3 282,471 291.5,497" stroke="#00ff00"/>
<polygon points="266.2,452.7 268.73,456.23 266.68,457.02" fill="#00ff00" stroke="#00ff00" stroke-width="0.4"/>
<text x="272" y="471" font-size="5" fill="#00ff00" stroke="#00ff00" stroke-width="0.5" text-anchor="middle" transform="rotate(70 272 471)" font-weight="bold">R75</text>
<polyline points="279.6,442.7 283.8,465.2 286.3,461 291.5,480" stroke="#00ff00"/>
<polygon points="279.6,442.7 281.41,446.65 279.25,447.03" fill="#00ff00" stroke="#00ff00" stroke-width="0.4"/>
<text x="280.5" y="460" font-size="5" fill="#00ff00" stroke="#00ff00" stroke-width="0.5" text-anchor="middle" transform="rotate(78 280.5 460)" font-weight="bold">R80</text>
<line x1="336.5" y1="427.3" x2="336.5" y2="451" stroke="#00ff00"/>
<polygon points="336.5,427.3 337.6,431.5 335.4,431.5" fill="#00ff00" stroke="#00ff00" stroke-width="0.4"/>
<polygon points="336.5,451 335.4,446.8 337.6,446.8" fill="#00ff00" stroke="#00ff00" stroke-width="0.4"/>
<line x1="336.5" y1="413" x2="336.5" y2="427" stroke="#00ff00"/>
<text x="333.5" y="418.5" font-size="5" fill="#00ff00" stroke="#00ff00" stroke-width="0.5" text-anchor="middle" font-weight="bold">25</text>
<line x1="363.5" y1="416.7" x2="363.5" y2="451" stroke="#00ff00"/>
<polygon points="363.5,436.6 362.4,432.4 364.6,432.4" fill="#00ff00" stroke="#00ff00" stroke-width="0.4"/>
<polygon points="363.5,441.6 364.6,445.8 362.4,445.8" fill="#00ff00" stroke="#00ff00" stroke-width="0.4"/>
<text x="360.3" y="421.5" font-size="5" fill="#00ff00" stroke="#00ff00" stroke-width="0.5" text-anchor="middle" font-weight="bold">4</text>
<line x1="316.5" y1="423.4" x2="316.5" y2="443.5" stroke="#00ff00"/>
<polygon points="316.5,434.8 315.4,430.6 317.6,430.6" fill="#00ff00" stroke="#00ff00" stroke-width="0.4"/>
<text x="314" y="423" font-size="5" fill="#00ff00" stroke="#00ff00" stroke-width="0.5" text-anchor="middle" transform="rotate(-90 314 423)" font-weight="bold">2</text>
<polyline points="311,436 326,468.3 337,468.3" stroke="#00ff00"/>
<text x="333.2" y="467" font-size="5" fill="#00ff00" stroke="#00ff00" stroke-width="0.5" text-anchor="middle" font-weight="bold">R2</text>
<line x1="383.5" y1="404.3" x2="438.5" y2="404.3" stroke="#00ff00"/>
<polygon points="383.5,404.3 387.7,403.2 387.7,405.4" fill="#00ff00" stroke="#00ff00" stroke-width="0.4"/>
<polygon points="438.5,404.3 434.3,405.4 434.3,403.2" fill="#00ff00" stroke="#00ff00" stroke-width="0.4"/>
<text x="412" y="402.5" font-size="5" fill="#00ff00" stroke="#00ff00" stroke-width="0.5" text-anchor="middle" font-weight="bold">55</text>
<text x="385.5" y="413.2" font-size="5" fill="#00ff00" stroke="#00ff00" stroke-width="0.5" text-anchor="middle" font-weight="bold">R14</text>
<polyline points="380,414.6 391.2,414.6 410.5,429.3" stroke="#00ff00"/>
<polygon points="410.5,429.3 406.48,427.65 407.81,425.89" fill="#00ff00" stroke="#00ff00" stroke-width="0.4"/>
<polyline points="401.3,452.7 398.7,484.5 393.7,476.5 389.4,499.7" stroke="#00ff00"/>
<polygon points="401.3,452.7 402.03,456.98 399.84,456.79" fill="#00ff00" stroke="#00ff00" stroke-width="0.4"/>
<text x="388.5" y="487" font-size="5" fill="#00ff00" stroke="#00ff00" stroke-width="0.5" text-anchor="middle" transform="rotate(-80 388.5 487)" font-weight="bold">R14</text>
<text x="463.7" y="376.8" font-size="7" fill="#00ff00" stroke="#00ff00" stroke-width="0.35" text-anchor="middle" textLength="31" lengthAdjust="spacingAndGlyphs" font-weight="bold">两端Φ40-Φ2.5倒</text>
<polyline points="479.1,378.3 443.7,378.3 420.8,415.1" stroke="#00ff00"/>
<text x="467.5" y="398" font-size="7" fill="#00ff00" stroke="#00ff00" stroke-width="0.35" text-anchor="middle" textLength="31" lengthAdjust="spacingAndGlyphs" font-weight="bold">轴瓦喷油处</text>
<polyline points="483.2,399.5 451,399.5 444.7,415.1" stroke="#00ff00"/>
<line x1="447.4" y1="408.3" x2="474.9" y2="408.3" stroke="#00ff00"/>
<line x1="457.8" y1="408.3" x2="457.8" y2="415.5" stroke="#00ff00"/>
<line x1="463.5" y1="408.3" x2="463.5" y2="415.5" stroke="#00ff00"/>
<polygon points="457.8,408.3 453.6,409.4 453.6,407.2" fill="#00ff00" stroke="#00ff00" stroke-width="0.4"/>
<polygon points="463.5,408.3 467.7,407.2 467.7,409.4" fill="#00ff00" stroke="#00ff00" stroke-width="0.4"/>
<text x="474.5" y="406.5" font-size="5" fill="#00ff00" stroke="#00ff00" stroke-width="0.5" text-anchor="middle" font-weight="bold">5</text>
<polyline points="473.9,422.4 516.1,384.6" stroke="#00ff00"/>
<polyline points="473.9,453.6 516.3,492.4" stroke="#00ff00"/>
<path d="M516.1 384.6 A80.5 80.5 0 0 1 516.3 492.4" stroke="#00ff00"/>
<polygon points="516.1,384.6 519.73,386.99 518.09,388.46" fill="#00ff00" stroke="#00ff00" stroke-width="0.4"/>
<polygon points="516.3,492.4 518.29,488.54 519.93,490.01" fill="#00ff00" stroke="#00ff00" stroke-width="0.4"/>
<text x="538.4" y="441" font-size="5" fill="#00ff00" stroke="#00ff00" stroke-width="0.5" text-anchor="middle" transform="rotate(-90 538.4 441)" font-weight="bold">90°</text>
<line x1="463.5" y1="415.8" x2="531" y2="415.8" stroke="#00ff00"/>
<line x1="463.5" y1="464" x2="531" y2="464" stroke="#00ff00"/>
<line x1="529.5" y1="415.8" x2="529.5" y2="464" stroke="#00ff00"/>
<polygon points="529.5,415.8 530.6,420 528.4,420" fill="#00ff00" stroke="#00ff00" stroke-width="0.4"/>
<polygon points="529.5,464 528.4,459.8 530.6,459.8" fill="#00ff00" stroke="#00ff00" stroke-width="0.4"/>
<text x="527.5" y="440" font-size="5.5" fill="#00ff00" stroke="#00ff00" stroke-width="0.35" text-anchor="middle" transform="rotate(-90 527.5 440)" textLength="24" lengthAdjust="spacingAndGlyphs" font-weight="bold">38±0.025</text>
<line x1="474" y1="421.5" x2="513.4" y2="421.5" stroke="#00ff00"/>
<line x1="474" y1="456.5" x2="513.4" y2="456.5" stroke="#00ff00"/>
<line x1="511.9" y1="421.5" x2="511.9" y2="456.5" stroke="#00ff00"/>
<polygon points="511.9,421.5 513,425.7 510.8,425.7" fill="#00ff00" stroke="#00ff00" stroke-width="0.4"/>
<polygon points="511.9,456.5 510.8,452.3 513,452.3" fill="#00ff00" stroke="#00ff00" stroke-width="0.4"/>
<text x="509.9" y="439" font-size="5" fill="#00ff00" stroke="#00ff00" stroke-width="0.5" text-anchor="middle" transform="rotate(-90 509.9 439)" font-weight="bold">32</text>
<line x1="474" y1="432.5" x2="503" y2="432.5" stroke="#00ff00"/>
<line x1="432.3" y1="445" x2="503" y2="445" stroke="#00ff00"/>
<line x1="502" y1="432.5" x2="502" y2="445" stroke="#00ff00"/>
<polygon points="502,432.5 503.1,436.7 500.9,436.7" fill="#00ff00" stroke="#00ff00" stroke-width="0.4"/>
<polygon points="502,445 500.9,440.8 503.1,440.8" fill="#00ff00" stroke="#00ff00" stroke-width="0.4"/>
<text x="500" y="439" font-size="5" fill="#00ff00" stroke="#00ff00" stroke-width="0.5" text-anchor="middle" transform="rotate(-90 500 439)" textLength="11" lengthAdjust="spacingAndGlyphs" font-weight="bold">Φ8.5</text>
<g transform="translate(433.3 445) rotate(0) scale(1.1)">
<polyline points="-3.6,-6.2 0,0 8.5,-14.5" stroke="#00ff00"/><line x1="-3.6" y1="-6.2" x2="3.6" y2="-6.2" stroke="#00ff00"/>
<text x="-2" y="-7.5" font-size="5" font-weight="bold" fill="#00ff00" stroke="none" text-anchor="middle">12.5</text>
</g>
<polygon points="420.5,453 428.5,448.5 431,457" stroke="#00ff00"/>
<line x1="420.5" y1="453" x2="438" y2="461.5" stroke="#00ff00"/>
<text x="430" y="453" font-size="4.5" fill="#00ff00" stroke="#00ff00" stroke-width="0.5" text-anchor="middle" transform="rotate(25 430 453)" font-weight="bold">1.6</text>
<line x1="449.3" y1="424.5" x2="449.3" y2="463" stroke="#00ff00"/>
<text x="447.5" y="452" font-size="5" fill="#00ff00" stroke="#00ff00" stroke-width="0.5" text-anchor="middle" transform="rotate(-90 447.5 452)" font-weight="bold">Φ40</text>
<g transform="translate(517.6 464) rotate(180) scale(1.1)">
<polyline points="-3.6,-6.2 0,0 8.5,-14.5" stroke="#00ff00"/><line x1="-3.6" y1="-6.2" x2="3.6" y2="-6.2" stroke="#00ff00"/>
</g>
<text x="518" y="476.5" font-size="4.5" fill="#00ff00" stroke="#00ff00" stroke-width="0.5" text-anchor="middle" font-weight="bold">1.6</text>
<line x1="414.3" y1="464" x2="414.3" y2="502.4" stroke="#00ff00"/>
<line x1="420.6" y1="464" x2="420.6" y2="487.4" stroke="#00ff00"/>
<line x1="457.4" y1="464" x2="457.4" y2="487.4" stroke="#00ff00"/>
<line x1="463.9" y1="464" x2="463.9" y2="502.4" stroke="#00ff00"/>
<line x1="420.6" y1="486.8" x2="457.4" y2="486.8" stroke="#00ff00"/>
<polygon points="420.6,486.8 424.8,485.7 424.8,487.9" fill="#00ff00" stroke="#00ff00" stroke-width="0.4"/>
<polygon points="457.4,486.8 453.2,487.9 453.2,485.7" fill="#00ff00" stroke="#00ff00" stroke-width="0.4"/>
<text x="440.3" y="484.8" font-size="5" fill="#00ff00" stroke="#00ff00" stroke-width="0.5" text-anchor="middle" textLength="33" lengthAdjust="spacingAndGlyphs" font-weight="bold">Φ33.5(+0.025)</text>
<line x1="414.3" y1="501" x2="463.9" y2="501" stroke="#00ff00"/>
<polygon points="414.3,501 418.5,499.9 418.5,502.1" fill="#00ff00" stroke="#00ff00" stroke-width="0.4"/>
<polygon points="463.9,501 459.7,502.1 459.7,499.9" fill="#00ff00" stroke="#00ff00" stroke-width="0.4"/>
<text x="440.3" y="499" font-size="5" fill="#00ff00" stroke="#00ff00" stroke-width="0.5" text-anchor="middle" textLength="9" lengthAdjust="spacingAndGlyphs" font-weight="bold">Φ40</text>
</g>
<g id="tech" font-weight="bold">
<text x="670" y="298.6" font-size="9" fill="#00ff00" stroke="#00ff00" stroke-width="0.35" text-anchor="middle" textLength="26" lengthAdjust="spacingAndGlyphs" font-weight="bold">技术要求</text>
<text x="598" y="309.6" font-size="9" fill="#00ff00" stroke="#00ff00" stroke-width="0.35" textLength="53" lengthAdjust="spacingAndGlyphs" font-weight="bold">1.锻造拔模角7°。</text>
<text x="598" y="320.92" font-size="9" fill="#00ff00" stroke="#00ff00" stroke-width="0.35" textLength="171" lengthAdjust="spacingAndGlyphs" font-weight="bold">2.连杆全部表面上不得有裂缝、发裂、夹皮、　 皮层、疏痕、</text>
<text x="598" y="332.24" font-size="9" fill="#00ff00" stroke="#00ff00" stroke-width="0.35" textLength="84" lengthAdjust="spacingAndGlyphs" font-weight="bold">毛　刺、氧化皮及腐蚀现象。</text>
<text x="598" y="343.56" font-size="9" fill="#00ff00" stroke="#00ff00" stroke-width="0.35" textLength="138" lengthAdjust="spacingAndGlyphs" font-weight="bold">3.连杆上不得有因金属未充满锻模而产生的缺陷。</text>
<text x="598" y="354.88" font-size="9" fill="#00ff00" stroke="#00ff00" stroke-width="0.35" textLength="61" lengthAdjust="spacingAndGlyphs" font-weight="bold">4.不允许用焊补修整。</text>
<text x="598" y="366.2" font-size="9" fill="#00ff00" stroke="#00ff00" stroke-width="0.35" textLength="174" lengthAdjust="spacingAndGlyphs" font-weight="bold">5.连杆纵向剖面内金属纤维应显示沿着连杆中心线的纵面，金属</text>
<text x="598" y="377.52" font-size="9" fill="#00ff00" stroke="#00ff00" stroke-width="0.35" textLength="168" lengthAdjust="spacingAndGlyphs" font-weight="bold">纤维方向与连杆外廓形状相符，无环曲及断裂情况，不得有裂</text>
<text x="598" y="388.84" font-size="9" fill="#00ff00" stroke="#00ff00" stroke-width="0.35" textLength="101" lengthAdjust="spacingAndGlyphs" font-weight="bold">孔、气泡、分层裂缝及非金属夹渣。</text>
<text x="598" y="400.16" font-size="9" fill="#00ff00" stroke="#00ff00" stroke-width="0.35" textLength="153" lengthAdjust="spacingAndGlyphs" font-weight="bold">6.毛坯应调质处理硬度HB224~269HB，在背尾处检验硬度。</text>
<text x="598" y="411.48" font-size="9" fill="#00ff00" stroke="#00ff00" stroke-width="0.35" textLength="175" lengthAdjust="spacingAndGlyphs" font-weight="bold">7.连杆成品的金相显微组织应为细致均匀索氏体组织，铁素体状</text>
<text x="598" y="422.8" font-size="9" fill="#00ff00" stroke="#00ff00" stroke-width="0.35" textLength="74" lengthAdjust="spacingAndGlyphs" font-weight="bold">允许以细微颗粒状态存在。</text>
<text x="598" y="434.12" font-size="9" fill="#00ff00" stroke="#00ff00" stroke-width="0.35" textLength="103" lengthAdjust="spacingAndGlyphs" font-weight="bold">8.连杆表面晶粒层厚度不大于0.4mm。</text>
<text x="598" y="445.44" font-size="9" fill="#00ff00" stroke="#00ff00" stroke-width="0.35" textLength="101" lengthAdjust="spacingAndGlyphs" font-weight="bold">9.连杆应经磁力探伤，探伤后退磁。</text>
<text x="598" y="456.76" font-size="9" fill="#00ff00" stroke="#00ff00" stroke-width="0.35" textLength="39.5" lengthAdjust="spacingAndGlyphs" font-weight="bold">10.喷丸处理。</text>
</g>
<g id="tb">
<polyline points="618.5,530.5 618.5,480.5 793.5,480.5" stroke="#ffffff"/>
<line x1="618.5" y1="500.5" x2="793.5" y2="500.5" stroke="#00ff00"/>
<line x1="618.5" y1="510.5" x2="793.5" y2="510.5" stroke="#00ff00"/>
<line x1="618.5" y1="520.5" x2="706.5" y2="520.5" stroke="#00ff00"/>
<line x1="637.5" y1="500.5" x2="637.5" y2="530.5" stroke="#00ff00"/>
<line x1="675.5" y1="500.5" x2="675.5" y2="530.5" stroke="#00ff00"/>
<line x1="706.5" y1="480.5" x2="706.5" y2="530.5" stroke="#00ff00"/>
<line x1="725.5" y1="480.5" x2="725.5" y2="510.5" stroke="#00ff00"/>
<line x1="750.5" y1="480.5" x2="750.5" y2="510.5" stroke="#00ff00"/>
<line x1="768.5" y1="500.5" x2="768.5" y2="510.5" stroke="#00ff00"/>
<line x1="706.5" y1="490.5" x2="750.5" y2="490.5" stroke="#00ff00"/>
<text x="660.5" y="496.5" font-size="13" fill="#00ff00" stroke="#00ff00" stroke-width="0.35" text-anchor="middle" textLength="31" lengthAdjust="spacingAndGlyphs" font-weight="bold">连杆体</text>
<text x="716.3" y="489" font-size="7.5" fill="#00ff00" stroke="#00ff00" stroke-width="0.35" text-anchor="middle" textLength="13" lengthAdjust="spacingAndGlyphs" font-weight="bold">比例</text>
<text x="737" y="488.8" font-size="8" fill="#00ff00" stroke="#00ff00" stroke-width="0.3" text-anchor="middle" textLength="11" lengthAdjust="spacingAndGlyphs">1:1</text>
<text x="716.3" y="499" font-size="7.5" fill="#00ff00" stroke="#00ff00" stroke-width="0.35" text-anchor="middle" textLength="13" lengthAdjust="spacingAndGlyphs" font-weight="bold">件数</text>
<text x="766" y="494" font-size="12" fill="#00ff00" stroke="#00ff00" stroke-width="0.3" text-anchor="middle" textLength="11" lengthAdjust="spacingAndGlyphs">A2</text>
<text x="629.3" y="508.8" font-size="7.5" fill="#00ff00" stroke="#00ff00" stroke-width="0.35" text-anchor="middle" textLength="13" lengthAdjust="spacingAndGlyphs" font-weight="bold">制图</text>
<text x="691.5" y="508.5" font-size="7" fill="#00ff00" stroke="#00ff00" stroke-width="0.35" text-anchor="middle" textLength="19" lengthAdjust="spacingAndGlyphs" font-weight="bold">2013.6</text>
<text x="715.5" y="508.8" font-size="7.5" fill="#00ff00" stroke="#00ff00" stroke-width="0.35" text-anchor="middle" textLength="13" lengthAdjust="spacingAndGlyphs" font-weight="bold">重量</text>
<text x="759" y="508.8" font-size="7.5" fill="#00ff00" stroke="#00ff00" stroke-width="0.35" text-anchor="middle" textLength="13" lengthAdjust="spacingAndGlyphs" font-weight="bold">材料</text>
<text x="780" y="508.8" font-size="8" fill="#00ff00" stroke="#00ff00" stroke-width="0.3" text-anchor="middle" textLength="7" lengthAdjust="spacingAndGlyphs">45</text>
<text x="629.3" y="518.8" font-size="7.5" fill="#00ff00" stroke="#00ff00" stroke-width="0.35" text-anchor="middle" textLength="13" lengthAdjust="spacingAndGlyphs" font-weight="bold">描图</text>
<text x="692" y="518.5" font-size="7" fill="#00ff00" stroke="#00ff00" stroke-width="0.35" text-anchor="middle" textLength="19" lengthAdjust="spacingAndGlyphs" font-weight="bold">2013.6</text>
<text x="629.3" y="528.8" font-size="7.5" fill="#00ff00" stroke="#00ff00" stroke-width="0.35" text-anchor="middle" textLength="13" lengthAdjust="spacingAndGlyphs" font-weight="bold">审核</text>
</g>
</svg></div></body></html>
